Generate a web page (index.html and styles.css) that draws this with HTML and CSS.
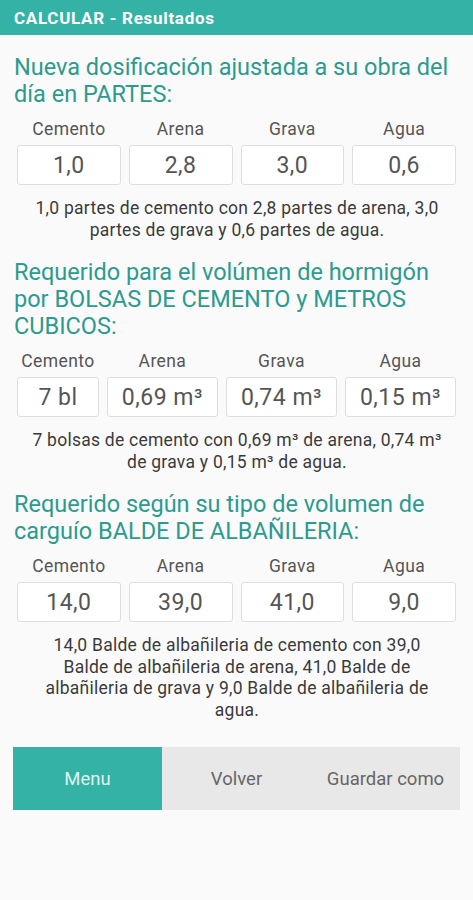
FILE: index.html
```html
<!DOCTYPE html>
<html lang="es">
<head>
    <meta charset="UTF-8">
    <meta name="viewport" content="width=device-width, initial-scale=1.0">
    <title>CALCULAR - Resultados</title>
    <link rel="stylesheet" href="styles.css">
</head>
<body>
    <div class="app-bar">CALCULAR - Resultados</div>

    <div class="content">
        <div class="section">
            <h2 class="section-title">Nueva dosificación ajustada a su obra del día en PARTES:</h2>
            <div class="values">
                <div class="value-col"><span class="label">Cemento</span><div class="box">1,0</div></div>
                <div class="value-col"><span class="label">Arena</span><div class="box">2,8</div></div>
                <div class="value-col"><span class="label">Grava</span><div class="box">3,0</div></div>
                <div class="value-col"><span class="label">Agua</span><div class="box">0,6</div></div>
            </div>
            <p class="summary">1,0 partes de cemento con 2,8 partes de arena, 3,0 partes de grava y 0,6 partes de agua.</p>
        </div>

        <div class="section">
            <h2 class="section-title">Requerido para el volúmen de hormigón por BOLSAS DE CEMENTO y METROS CUBICOS:</h2>
            <div class="values">
                <div class="value-col"><span class="label">Cemento</span><div class="box">7 bl</div></div>
                <div class="value-col"><span class="label">Arena</span><div class="box">0,69 m³</div></div>
                <div class="value-col"><span class="label">Grava</span><div class="box">0,74 m³</div></div>
                <div class="value-col"><span class="label">Agua</span><div class="box">0,15 m³</div></div>
            </div>
            <p class="summary">7 bolsas de cemento con 0,69&nbsp;m³ de arena, 0,74&nbsp;m³ de grava y 0,15&nbsp;m³ de agua.</p>
        </div>

        <div class="section">
            <h2 class="section-title">Requerido según su tipo de volumen de carguío BALDE DE ALBAÑILERIA:</h2>
            <div class="values">
                <div class="value-col"><span class="label">Cemento</span><div class="box">14,0</div></div>
                <div class="value-col"><span class="label">Arena</span><div class="box">39,0</div></div>
                <div class="value-col"><span class="label">Grava</span><div class="box">41,0</div></div>
                <div class="value-col"><span class="label">Agua</span><div class="box">9,0</div></div>
            </div>
            <p class="summary">14,0 Balde de albañileria de cemento con 39,0 Balde de albañileria de arena, 41,0 Balde de albañileria de grava y 9,0 Balde de albañileria de agua.</p>
        </div>

        <div class="actions">
            <button class="action active">Menu</button>
            <button class="action">Volver</button>
            <button class="action">Guardar como</button>
        </div>
    </div>
</body>
</html>
```

FILE: styles.css
```css
body {
    margin: 0;
    font-family: Roboto, 'Noto Sans', sans-serif;
    background-color: #fafafa;
    color: #333;
}

.app-bar {
    height: 35px;
    line-height: 36px;
    padding: 0 14px;
    background-color: #34b2a5;
    color: #fff;
    font-size: 17px;
    font-weight: bold;
    letter-spacing: 0.7px;
}

.content {
    padding: 0 13px 0 14px;
}

.section {
    padding-top: 19px;
}

.section + .section {
    padding-top: 18px;
}

.section-title {
    margin: 0;
    font-size: 23.5px;
    font-weight: normal;
    line-height: 27px;
    color: #2c9a8e;
}

.values {
    display: flex;
    gap: 8px;
    margin: 11px 4px 0 3px;
}

.value-col {
    flex: 1 1 auto;
    display: flex;
    flex-direction: column;
    align-items: center;
    text-align: center;
}

/* label must not widen its column: only the box content does */
.label {
    width: 0;
    min-width: 100%;
    white-space: nowrap;
    font-size: 17.5px;
    line-height: 20px;
    letter-spacing: 0.4px;
    color: #555;
}

.box {
    align-self: stretch;
    box-sizing: border-box;
    min-width: 62px;
    margin-top: 6px;
    height: 40px;
    line-height: 40px;
    padding: 0 4px;
    border: 1px solid #dedede;
    border-radius: 3px;
    background-color: #fff;
    font-size: 23px;
    letter-spacing: 0.5px;
    color: #555;
    white-space: nowrap;
}

.summary {
    margin: 13px 18px 0 18px;
    font-size: 17.5px;
    line-height: 21.5px;
    letter-spacing: 0.25px;
    text-align: center;
    color: #3a3a3a;
}

.actions {
    display: flex;
    margin: 26px 0 0 -1px;
    background-color: #e8e8e8;
}

.action {
    flex: 1;
    height: 63px;
    border: none;
    background: none;
    font-family: inherit;
    font-size: 18.5px;
    color: #666;
}

.action.active {
    background-color: #34b2a5;
    color: #dff5f2;
}
```
